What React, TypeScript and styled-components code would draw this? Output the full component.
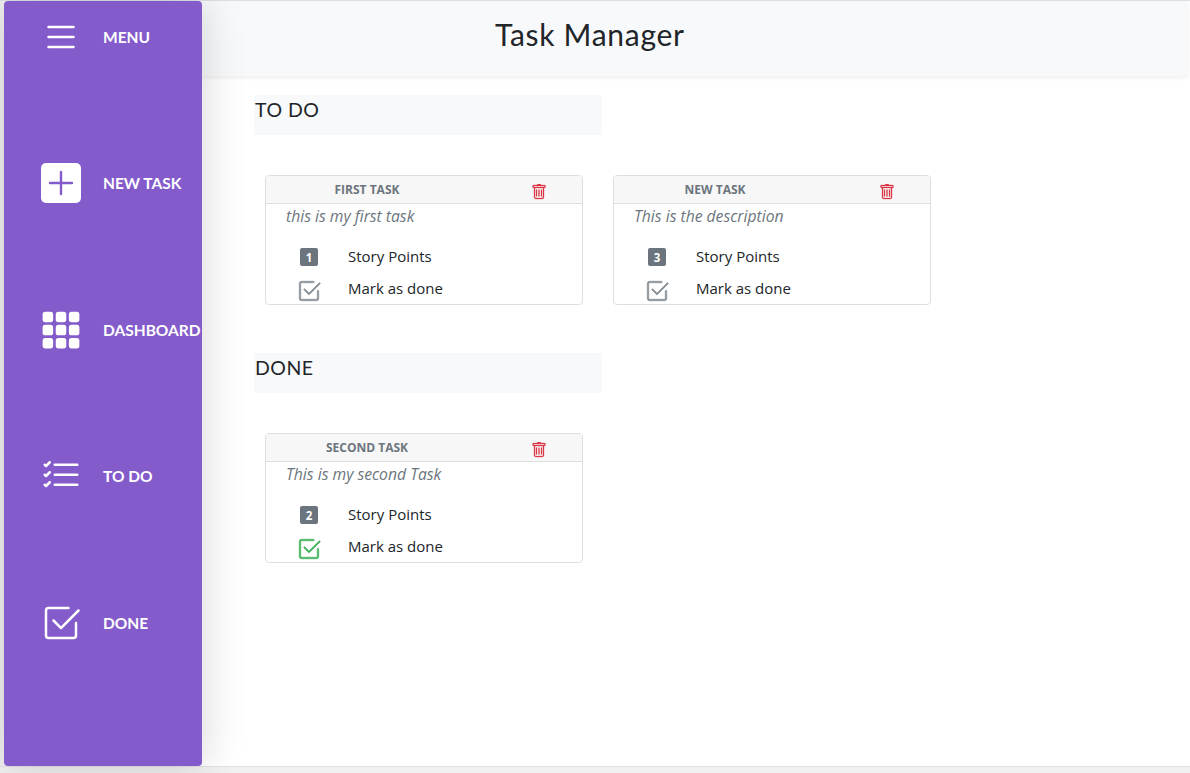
import React from "react";
import styled, { createGlobalStyle } from "styled-components";
import {
  BsCheck2Square,
  BsGrid3X3GapFill,
  BsList,
  BsListCheck,
  BsTrash,
} from "react-icons/bs";

const GlobalStyle = createGlobalStyle`
  html, body {
    margin: 0;
    height: 100%;
    overflow: hidden;
    background: #f1f1f1;
  }
  * {
    box-sizing: border-box;
  }
`;

const Page = styled.div`
  height: 767px;
  display: flex;
  padding-left: 4px;
  background: #ffffff;
  border-top: 1px solid #dee2e6;
  border-bottom: 1px solid #e2e2e2;
  box-shadow: inset 4px 0 0 #f1f1f1;
`;

const Sidebar = styled.nav`
  position: relative;
  z-index: 2;
  flex: 0 0 198px;
  min-width: 0;
  display: flex;
  flex-direction: column;
  gap: 106.5px;
  padding-top: 15.5px;
  background: #845bcb;
  border-radius: 4px;
  box-shadow: 0 0 44px rgba(0, 0, 0, 0.17);
`;

const NavItem = styled.a`
  height: 40px;
  display: flex;
  align-items: center;
  color: #ffffff;
  font-family: "Lato", sans-serif;
  font-weight: 700;
  font-size: 15.5px;
  white-space: nowrap;
`;

const NavIcon = styled.span`
  flex: 0 0 99px;
  padding-left: 15px;
  display: flex;
  align-items: center;
  justify-content: center;
`;

const Main = styled.main`
  flex: 1;
  min-width: 0;
  display: flex;
  flex-direction: column;
`;

const Header = styled.header`
  height: 75px;
  flex: none;
  display: flex;
  align-items: center;
  padding: 0 0 10px 293px;
  background: #f8f9fa;
  border-bottom-right-radius: 4px;
  box-shadow: 0 2px 4px rgba(0, 0, 0, 0.07);
  margin-right: 2px;
`;

const Title = styled.h1`
  margin: 0;
  font-family: "Lato", sans-serif;
  font-weight: 400;
  font-size: 30px;
  letter-spacing: 0.7px;
  color: #212529;
`;

const Content = styled.div`
  display: flex;
  flex-direction: column;
  gap: 48px;
  padding: 19px 0 0 52px;
`;

const SectionTitle = styled.h2`
  width: 348px;
  height: 40px;
  margin: 0 0 40px;
  padding: 1px 0 0 1px;
  background: #f8f9fa;
  font-family: "Lato", sans-serif;
  font-weight: 400;
  font-size: 19.5px;
  line-height: 28px;
  letter-spacing: 0.5px;
  color: #212529;
`;

const CardRow = styled.div`
  display: flex;
  gap: 30px;
  padding-left: 11px;
`;

const Card = styled.article`
  width: 318px;
  height: 130px;
  background: #ffffff;
  border: 1px solid #dfdfdf;
  border-radius: 4px;
  font-family: "Open Sans", sans-serif;
`;

const CardHeader = styled.div`
  height: 28px;
  display: grid;
  grid-template-columns: 202px 1fr;
  align-items: center;
  background: #f7f7f7;
  border-bottom: 1px solid #dfdfdf;
  border-radius: 3px 3px 0 0;
`;

const CardTitle = styled.h3`
  margin: 0;
  text-align: center;
  font-size: 12px;
  font-weight: 700;
  color: #6c757d;
`;

const DeleteButton = styled.span`
  padding: 4px 0 0 63px;
  display: flex;
  color: #dc3545;
`;

const Description = styled.p`
  margin: 0 0 13px;
  padding-left: 20px;
  height: 24px;
  font-size: 15.7px;
  line-height: 24px;
  font-style: italic;
  color: #6c757d;
`;

const InfoRow = styled.div`
  height: 32px;
  display: grid;
  grid-template-columns: 82px 1fr;
  align-items: center;
  font-size: 15px;
  color: #212529;
`;

const InfoIcon = styled.span`
  display: flex;
  justify-content: center;
  padding-left: 4px;
`;

const InfoLabel = styled.span`
  padding-bottom: 2px;
`;

const PointsBadge = styled.span`
  width: 18px;
  height: 18px;
  display: flex;
  align-items: center;
  justify-content: center;
  border-radius: 2px;
  background: #6c757d;
  color: #ffffff;
  font-size: 11.5px;
  font-weight: 700;
`;

const DoneMark = styled.span<{ $done: boolean }>`
  display: flex;
  margin-top: 3px;
  color: ${({ $done }) => ($done ? "#3fb25d" : "#868e96")};
`;

interface ITask {
  title: string;
  description: string;
  points: number;
  done: boolean;
}

const todoTasks: ITask[] = [
  { title: "FIRST TASK", description: "this is my first task", points: 1, done: false },
  { title: "NEW TASK", description: "This is the description", points: 3, done: false },
];

const doneTasks: ITask[] = [
  { title: "SECOND TASK", description: "This is my second Task", points: 2, done: true },
];

const PlusTile = () => (
  <svg width="40" height="40" viewBox="0 0 40 40">
    <rect width="40" height="40" rx="5" fill="#ffffff" />
    <path d="M20 9v22M9 20h22" stroke="#845bcb" strokeWidth="2.4" strokeLinecap="round" />
  </svg>
);

const navItems = [
  { label: "MENU", icon: <BsList size={40} /> },
  { label: "NEW TASK", icon: <PlusTile /> },
  { label: "DASHBOARD", icon: <BsGrid3X3GapFill size={42} /> },
  { label: "TO DO", icon: <BsListCheck size={40} /> },
  { label: "DONE", icon: <BsCheck2Square size={40} /> },
];

const TaskCard = ({ title, description, points, done }: ITask) => (
  <Card>
    <CardHeader>
      <CardTitle>{title}</CardTitle>
      <DeleteButton>
        <BsTrash size={16} stroke="currentColor" strokeWidth={0.3} />
      </DeleteButton>
    </CardHeader>
    <Description>{description}</Description>
    <InfoRow>
      <InfoIcon>
        <PointsBadge>{points}</PointsBadge>
      </InfoIcon>
      <InfoLabel>Story Points</InfoLabel>
    </InfoRow>
    <InfoRow>
      <InfoIcon>
        <DoneMark $done={done}>
          <BsCheck2Square size={24} stroke="currentColor" strokeWidth={0.4} />
        </DoneMark>
      </InfoIcon>
      <InfoLabel>Mark as done</InfoLabel>
    </InfoRow>
  </Card>
);

const TaskSection = ({ title, tasks }: { title: string; tasks: ITask[] }) => (
  <section>
    <SectionTitle>{title}</SectionTitle>
    <CardRow>
      {tasks.map((task) => (
        <TaskCard key={task.title} {...task} />
      ))}
    </CardRow>
  </section>
);

const App = () => (
  <>
    <GlobalStyle />
    <Page>
      <Sidebar>
        {navItems.map((item) => (
          <NavItem key={item.label}>
            <NavIcon>{item.icon}</NavIcon>
            {item.label}
          </NavItem>
        ))}
      </Sidebar>
      <Main>
        <Header>
          <Title>Task Manager</Title>
        </Header>
        <Content>
          <TaskSection title="TO DO" tasks={todoTasks} />
          <TaskSection title="DONE" tasks={doneTasks} />
        </Content>
      </Main>
    </Page>
  </>
);

export default App;
